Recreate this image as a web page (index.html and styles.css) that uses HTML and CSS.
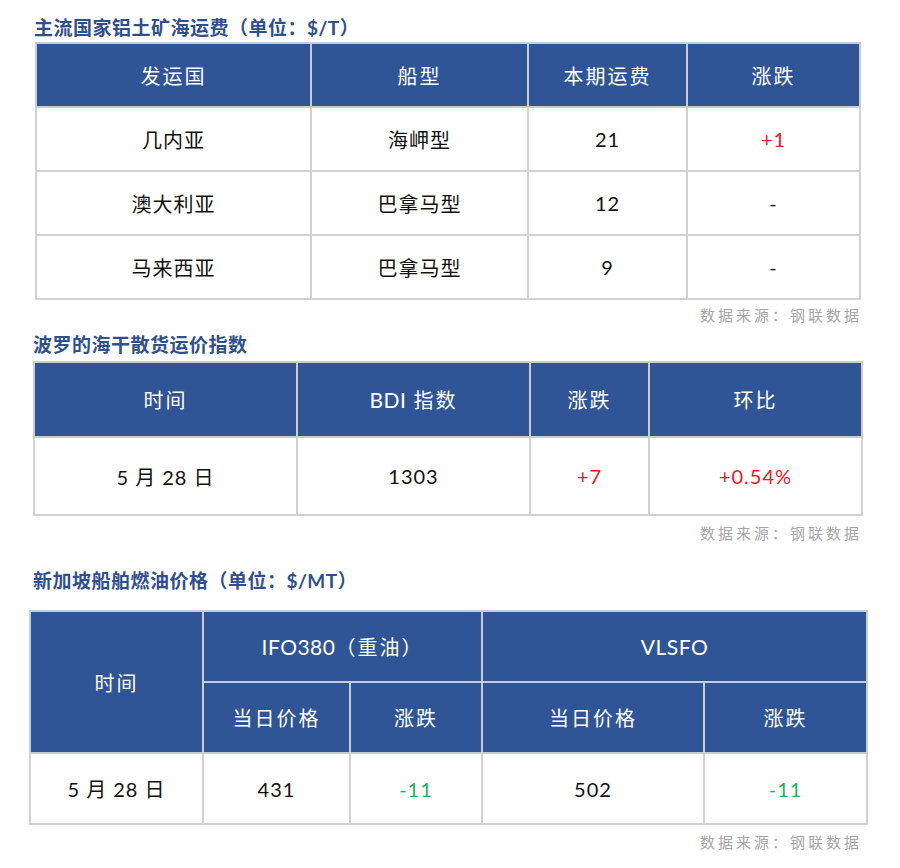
FILE: index.html
```html
<!DOCTYPE html>
<html lang="zh">
<head>
<meta charset="utf-8">
<link rel="stylesheet" href="styles.css">
</head>
<body>
<div class="page">
  <section class="sec sec1">
    <h2 class="title">主流国家铝土矿海运费（单位：$/T）</h2>
    <table class="tbl t1">
      <colgroup><col class="c1a"><col class="c1b"><col class="c1c"><col class="c1d"></colgroup>
      <thead><tr><th>发运国</th><th>船型</th><th>本期运费</th><th>涨跌</th></tr></thead>
      <tbody>
        <tr><td>几内亚</td><td>海岬型</td><td>21</td><td class="up">+1</td></tr>
        <tr><td>澳大利亚</td><td>巴拿马型</td><td>12</td><td>-</td></tr>
        <tr><td>马来西亚</td><td>巴拿马型</td><td>9</td><td>-</td></tr>
      </tbody>
    </table>
    <p class="src src1">数据来源：钢联数据</p>
  </section>

  <section class="sec sec2">
    <h2 class="title">波罗的海干散货运价指数</h2>
    <table class="tbl t2">
      <colgroup><col class="c2a"><col class="c2b"><col class="c2c"><col class="c2d"></colgroup>
      <thead><tr><th>时间</th><th><span class="lat">BDI</span> 指数</th><th>涨跌</th><th>环比</th></tr></thead>
      <tbody>
        <tr><td>5 月 28 日</td><td>1303</td><td class="up">+7</td><td class="up">+0.54%</td></tr>
      </tbody>
    </table>
    <p class="src src2">数据来源：钢联数据</p>
  </section>

  <section class="sec sec3">
    <h2 class="title">新加坡船舶燃油价格（单位：$/MT）</h2>
    <table class="tbl t3">
      <colgroup><col class="c3a"><col class="c3b"><col class="c3c"><col class="c3d"><col class="c3e"></colgroup>
      <thead>
        <tr class="r3top"><th rowspan="2">时间</th><th colspan="2"><span class="lat">IFO380</span>（重油）</th><th colspan="2"><span class="lat">VLSFO</span></th></tr>
        <tr class="r3sub"><th>当日价格</th><th>涨跌</th><th>当日价格</th><th>涨跌</th></tr>
      </thead>
      <tbody>
        <tr class="r3data"><td>5 月 28 日</td><td>431</td><td class="down">-11</td><td>502</td><td class="down">-11</td></tr>
      </tbody>
    </table>
    <p class="src src3">数据来源：钢联数据</p>
  </section>
</div>
</body>
</html>
```

FILE: styles.css
```css
* { box-sizing: border-box; }
html, body { margin: 0; padding: 0; background: #ffffff; }
body {
  font-family: Lato, "Noto Sans CJK SC", sans-serif;
  color: #1a1a1a;
  width: 900px;
}
.page { display: flex; flex-direction: column; }
.sec { display: flex; flex-direction: column; }
.title {
  margin: 0;
  font-family: Lato, "Noto Sans CJK SC", sans-serif;
  font-weight: 700;
  font-size: 19px;
  line-height: 26px;
  color: #2f4f8f;
  letter-spacing: 0.5px;
}
.sec1 .title { margin: 15px 0 1px 34px; }
.sec2 .title { margin: 6px 0 3px 33px; }
.sec3 .title { margin: 24px 0 16px 33px; }

.tbl {
  border-collapse: collapse;
  table-layout: fixed;
  font-size: 20px;
}
.tbl th, .tbl td {
  border: 2px solid #d2d2d2;
  text-align: center;
  vertical-align: middle;
  padding: 0;
}
.tbl th {
  background: #2f5597;
  color: #ffffff;
  font-weight: 400;
  letter-spacing: 2px;
  border-color: #c9ccd3;
}
.tbl th .lat { letter-spacing: 0.5px; font-size: 21px; }
.tbl td { color: #111111; letter-spacing: 1px; }
.tbl td.up { color: #f01818; }
.tbl td.down { color: #1fb45a; }

.t1 { margin-left: 35px; width: 824px; }
.t1 th, .t1 td { height: 64px; }
.c1a { width: 275px; } .c1b { width: 217px; } .c1c { width: 159px; } .c1d { width: 173px; }

.t2 { margin-left: 33px; width: 828px; }
.t2 th { height: 75px; }
.t2 td { height: 78px; }
.c2a { width: 263px; } .c2b { width: 233px; } .c2c { width: 119px; } .c2d { width: 213px; }

.t3 { margin-left: 29px; width: 837px; }
.r3top th { height: 71px; }
.r3sub th { height: 71px; }
.r3data td { height: 71px; }
.c3a { width: 173px; } .c3b { width: 147px; } .c3c { width: 132px; } .c3d { width: 222px; } .c3e { width: 163px; }

.src {
  margin: 0;
  width: 862px;
  text-align: right;
  font-family: "Noto Sans CJK SC", sans-serif;
  font-size: 15px;
  line-height: 22px;
  color: #a6a6a6;
  letter-spacing: 3px;
}
.src1 { margin-top: 4px; }
.src2 { margin-top: 6px; }
.src3 { margin-top: 6px; }
```
